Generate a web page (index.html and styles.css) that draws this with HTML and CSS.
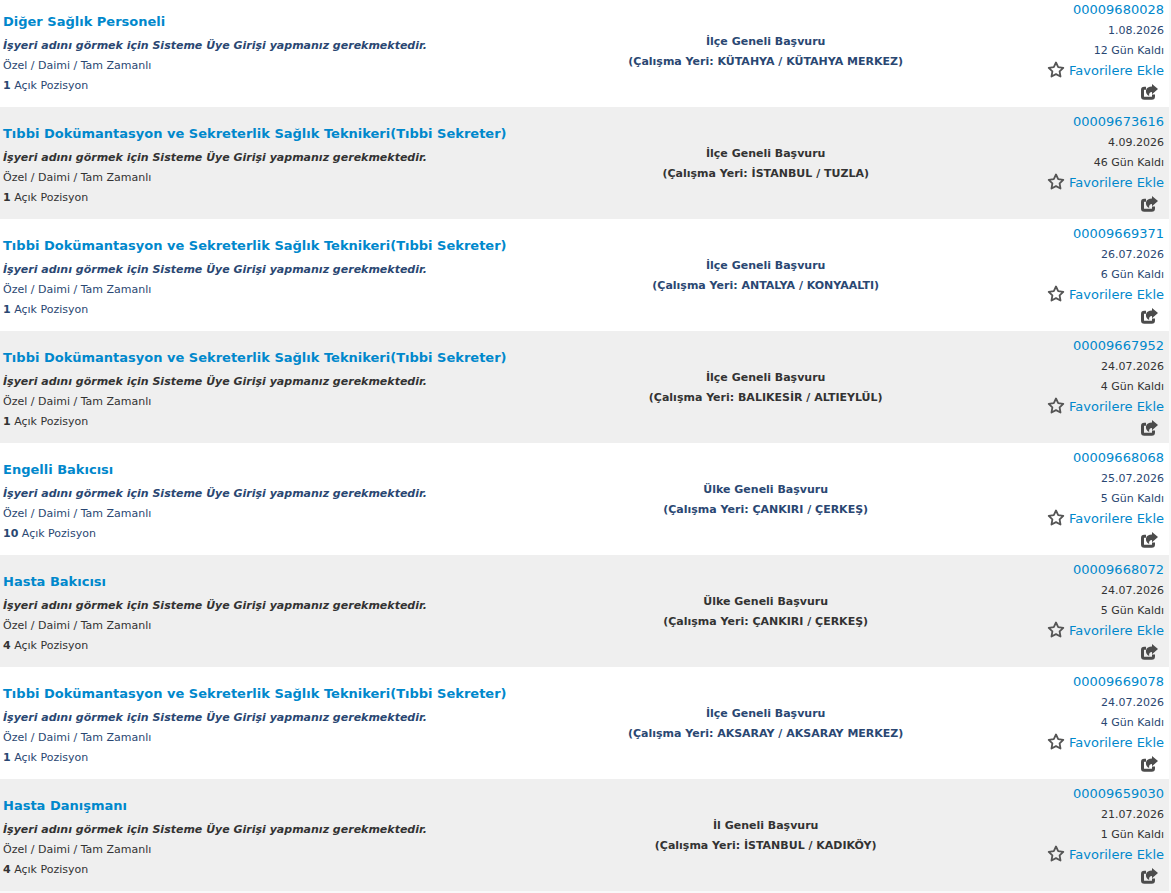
FILE: index.html
```
<!DOCTYPE html>
<html lang="tr">
<head>
<meta charset="utf-8">
<title>Açık İş İlanları</title>
<link rel="stylesheet" href="styles.css">
</head>
<body>
<svg class="sprite" aria-hidden="true">
<symbol id="star" viewBox="0 0 18 17"><path d="M9 1.500L11.200 6.200L16.300 6.900L12.600 10.400L13.500 15.500L9 13.100L4.500 15.500L5.400 10.400L1.700 6.900L6.800 6.200Z" fill="none" stroke="#555" stroke-width="1.800" stroke-linejoin="round"/></symbol>
<symbol id="share" viewBox="0 0 17 16"><path d="M5 4.300H3.300Q1.500 4.300 1.500 6V12.500Q1.500 14.300 3.300 14.300H10.700Q12.500 14.300 12.500 12.500V10.500" fill="none" stroke="#4c4c4c" stroke-width="3"/><path d="M11 0L17 5L11 10.200V8C8.800 8 7.800 9.200 8.200 12C5.600 11 4.600 8.600 5 6.300C5.600 3.600 7.800 2.500 11 2.500Z" fill="#4c4c4c"/></symbol>
</svg>
<table class="jobs">
<tbody>
<tr>
<td class="job"><a class="title" href="#">Diğer Sağlık Personeli</a><p class="employer">İşyeri adını görmek için Sisteme Üye Girişi yapmanız gerekmektedir.</p><p>Özel / Daimi / Tam Zamanlı</p><p><b>1</b> Açık Pozisyon</p></td>
<td class="place"><p>İlçe Geneli Başvuru</p><p>(Çalışma Yeri: KÜTAHYA / KÜTAHYA MERKEZ)</p></td>
<td class="info"><a class="code" href="#">00009680028</a><p>1.08.2026</p><p>12 Gün Kaldı</p><a class="favorite" href="#"><svg><use href="#star"/></svg>Favorilere Ekle</a><button class="share" type="button" aria-label="Paylaş"><svg><use href="#share"/></svg></button></td>
</tr>
<tr>
<td class="job"><a class="title" href="#">Tıbbi Dokümantasyon ve Sekreterlik Sağlık Teknikeri(Tıbbi Sekreter)</a><p class="employer">İşyeri adını görmek için Sisteme Üye Girişi yapmanız gerekmektedir.</p><p>Özel / Daimi / Tam Zamanlı</p><p><b>1</b> Açık Pozisyon</p></td>
<td class="place"><p>İlçe Geneli Başvuru</p><p>(Çalışma Yeri: İSTANBUL / TUZLA)</p></td>
<td class="info"><a class="code" href="#">00009673616</a><p>4.09.2026</p><p>46 Gün Kaldı</p><a class="favorite" href="#"><svg><use href="#star"/></svg>Favorilere Ekle</a><button class="share" type="button" aria-label="Paylaş"><svg><use href="#share"/></svg></button></td>
</tr>
<tr>
<td class="job"><a class="title" href="#">Tıbbi Dokümantasyon ve Sekreterlik Sağlık Teknikeri(Tıbbi Sekreter)</a><p class="employer">İşyeri adını görmek için Sisteme Üye Girişi yapmanız gerekmektedir.</p><p>Özel / Daimi / Tam Zamanlı</p><p><b>1</b> Açık Pozisyon</p></td>
<td class="place"><p>İlçe Geneli Başvuru</p><p>(Çalışma Yeri: ANTALYA / KONYAALTI)</p></td>
<td class="info"><a class="code" href="#">00009669371</a><p>26.07.2026</p><p>6 Gün Kaldı</p><a class="favorite" href="#"><svg><use href="#star"/></svg>Favorilere Ekle</a><button class="share" type="button" aria-label="Paylaş"><svg><use href="#share"/></svg></button></td>
</tr>
<tr>
<td class="job"><a class="title" href="#">Tıbbi Dokümantasyon ve Sekreterlik Sağlık Teknikeri(Tıbbi Sekreter)</a><p class="employer">İşyeri adını görmek için Sisteme Üye Girişi yapmanız gerekmektedir.</p><p>Özel / Daimi / Tam Zamanlı</p><p><b>1</b> Açık Pozisyon</p></td>
<td class="place"><p>İlçe Geneli Başvuru</p><p>(Çalışma Yeri: BALIKESİR / ALTIEYLÜL)</p></td>
<td class="info"><a class="code" href="#">00009667952</a><p>24.07.2026</p><p>4 Gün Kaldı</p><a class="favorite" href="#"><svg><use href="#star"/></svg>Favorilere Ekle</a><button class="share" type="button" aria-label="Paylaş"><svg><use href="#share"/></svg></button></td>
</tr>
<tr>
<td class="job"><a class="title" href="#">Engelli Bakıcısı</a><p class="employer">İşyeri adını görmek için Sisteme Üye Girişi yapmanız gerekmektedir.</p><p>Özel / Daimi / Tam Zamanlı</p><p><b>10</b> Açık Pozisyon</p></td>
<td class="place"><p>Ülke Geneli Başvuru</p><p>(Çalışma Yeri: ÇANKIRI / ÇERKEŞ)</p></td>
<td class="info"><a class="code" href="#">00009668068</a><p>25.07.2026</p><p>5 Gün Kaldı</p><a class="favorite" href="#"><svg><use href="#star"/></svg>Favorilere Ekle</a><button class="share" type="button" aria-label="Paylaş"><svg><use href="#share"/></svg></button></td>
</tr>
<tr>
<td class="job"><a class="title" href="#">Hasta Bakıcısı</a><p class="employer">İşyeri adını görmek için Sisteme Üye Girişi yapmanız gerekmektedir.</p><p>Özel / Daimi / Tam Zamanlı</p><p><b>4</b> Açık Pozisyon</p></td>
<td class="place"><p>Ülke Geneli Başvuru</p><p>(Çalışma Yeri: ÇANKIRI / ÇERKEŞ)</p></td>
<td class="info"><a class="code" href="#">00009668072</a><p>24.07.2026</p><p>5 Gün Kaldı</p><a class="favorite" href="#"><svg><use href="#star"/></svg>Favorilere Ekle</a><button class="share" type="button" aria-label="Paylaş"><svg><use href="#share"/></svg></button></td>
</tr>
<tr>
<td class="job"><a class="title" href="#">Tıbbi Dokümantasyon ve Sekreterlik Sağlık Teknikeri(Tıbbi Sekreter)</a><p class="employer">İşyeri adını görmek için Sisteme Üye Girişi yapmanız gerekmektedir.</p><p>Özel / Daimi / Tam Zamanlı</p><p><b>1</b> Açık Pozisyon</p></td>
<td class="place"><p>İlçe Geneli Başvuru</p><p>(Çalışma Yeri: AKSARAY / AKSARAY MERKEZ)</p></td>
<td class="info"><a class="code" href="#">00009669078</a><p>24.07.2026</p><p>4 Gün Kaldı</p><a class="favorite" href="#"><svg><use href="#star"/></svg>Favorilere Ekle</a><button class="share" type="button" aria-label="Paylaş"><svg><use href="#share"/></svg></button></td>
</tr>
<tr>
<td class="job"><a class="title" href="#">Hasta Danışmanı</a><p class="employer">İşyeri adını görmek için Sisteme Üye Girişi yapmanız gerekmektedir.</p><p>Özel / Daimi / Tam Zamanlı</p><p><b>4</b> Açık Pozisyon</p></td>
<td class="place"><p>İl Geneli Başvuru</p><p>(Çalışma Yeri: İSTANBUL / KADIKÖY)</p></td>
<td class="info"><a class="code" href="#">00009659030</a><p>21.07.2026</p><p>1 Gün Kaldı</p><a class="favorite" href="#"><svg><use href="#star"/></svg>Favorilere Ekle</a><button class="share" type="button" aria-label="Paylaş"><svg><use href="#share"/></svg></button></td>
</tr>
</tbody>
</table>
</body>
</html>
```
FILE: styles.css
```
body {
  display: flow-root;
  margin: 0;
  padding-right: 2px;
  background: #f9f9f9;
  font-family: "DejaVu Sans", sans-serif;
  font-size: 11px;
  line-height: 20px;
}
.sprite {
  display: none;
}
.jobs {
  width: 100%;
  margin-top: -5px;
  border-collapse: collapse;
  table-layout: fixed;
  background: #fff;
  color: #2a4772;
}
.jobs tr:nth-child(even) {
  background: #efefef;
  color: #333;
}
.jobs td {
  box-sizing: border-box;
  padding: 6px 5px 4px;
  vertical-align: middle;
}
.jobs p {
  margin: 0;
}
.jobs a {
  color: #08c;
  font-size: 13px;
  text-decoration: none;
}
.jobs .job {
  width: 50%;
  padding-left: 3px;
}
.jobs .title {
  display: block;
  font-weight: bold;
  line-height: 28px;
}
.employer {
  font-weight: bold;
  font-style: italic;
}
.jobs .place {
  width: 31%;
  text-align: center;
  font-weight: bold;
}
.jobs .info {
  width: 19%;
  padding: 5px;
  text-align: right;
}
.code {
  display: block;
  margin-bottom: 1px;
}
.favorite {
  display: flex;
  align-items: flex-start;
  justify-content: flex-end;
  gap: 4px;
}
.favorite svg {
  width: 18px;
  height: 17px;
}
.share {
  display: flex;
  align-items: center;
  height: 21px;
  margin: 0 6px 0 auto;
  padding: 0;
  border: 0;
  background: none;
  cursor: pointer;
}
.share svg {
  width: 17px;
  height: 16px;
}
```
